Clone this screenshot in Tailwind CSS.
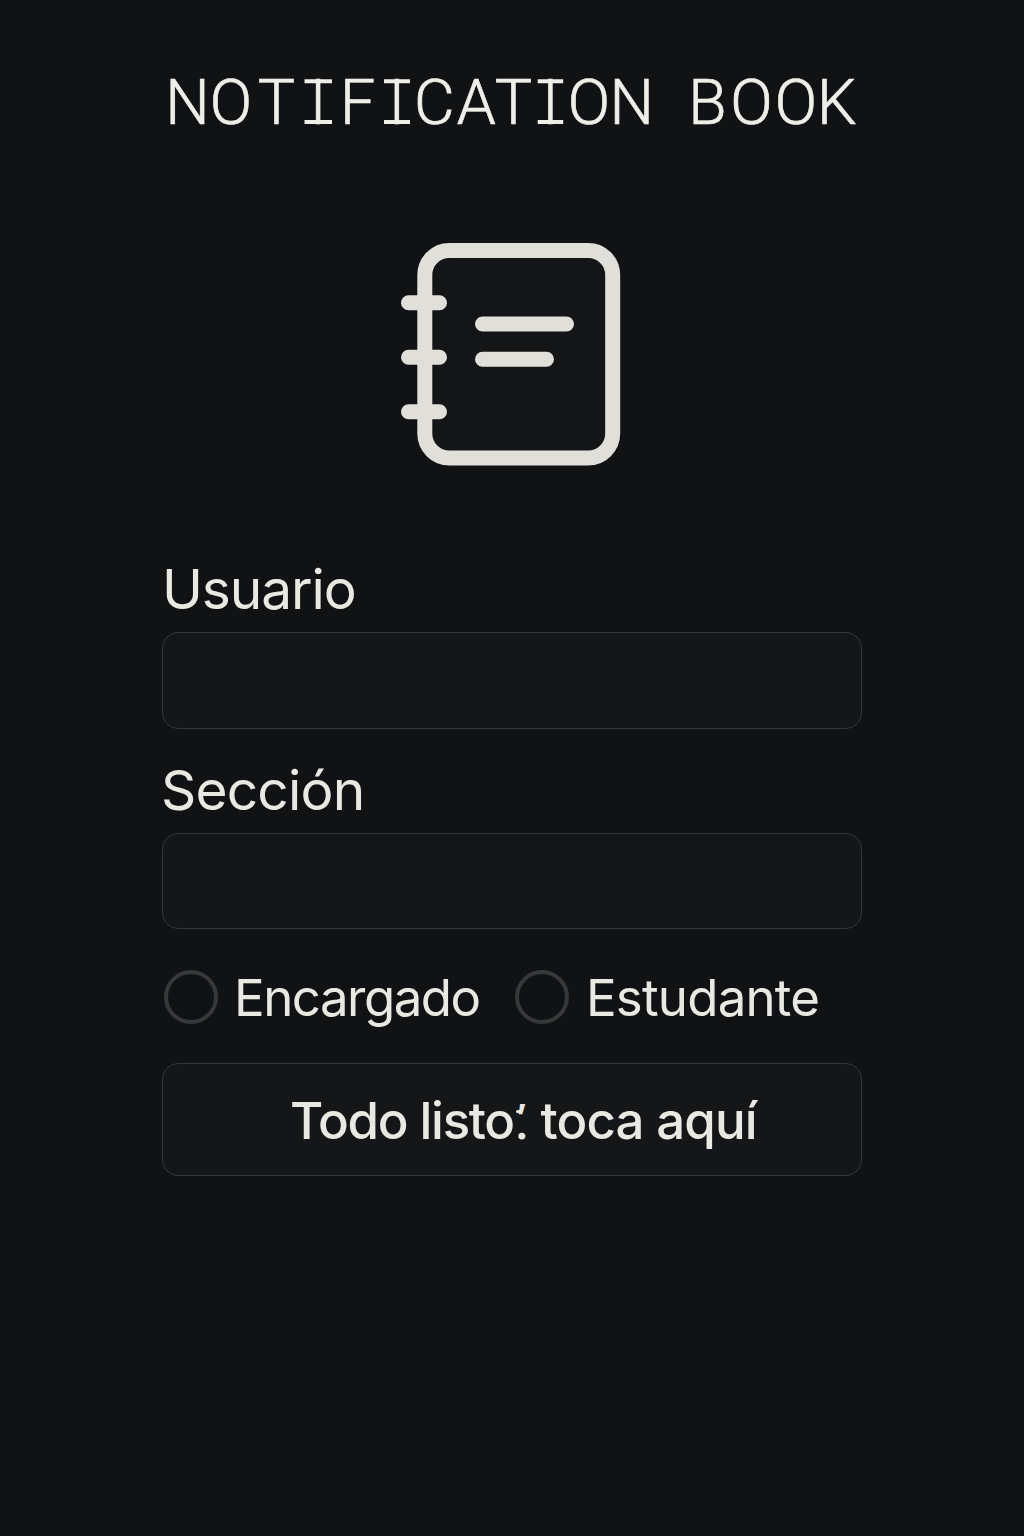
<!DOCTYPE html>
<html lang="es">
<head>
<meta charset="utf-8">
<title>Notification Book</title>
<script src="https://cdn.jsdelivr.net/npm/@tailwindcss/browser@4"></script>
</head>
<body class="bg-[#101214] text-[#eae8e2] font-['Inter',sans-serif]">
<main class="w-[700px] h-[1536px] ml-[162px] pt-[60px] flex flex-col">
  <h1 class="h-[80px] -mx-[12px]">
    <svg class="block w-[724px] h-[80px]" viewBox="150 60 724 80" fill="#f0eee9">
      <text y="124" text-anchor="middle" stroke="#f0eee9" stroke-width="0.7" class="font-['Roboto',sans-serif] font-light text-[62.5px]" x="187.5 231 276.5 318 357.5 396.8 434.2 476.4 513.5 550.4 588.8 631.7 670 707.5 751.5 796 836.8">NOTIFICATION BOOK</text>
      <g stroke="#f0eee9" stroke-width="4"><path d="M304.5 81.3h27.5M304.5 122h27.5M384 81.3h26M384 122h26M537.7 81.3h25.5M537.7 122h25.5"/></g>
    </svg>
  </h1>
  <svg class="block mt-[100px] ml-[236px] w-[226px] h-[230px] shrink-0" viewBox="398 240 226 230" fill="none" stroke="#e1dfda" stroke-width="15" stroke-linecap="round">
    <rect x="424.8" y="250.5" width="187.9" height="207.5" rx="24.5" fill="#131517"/>
    <path d="M408.5 302.7h31M408.5 357.3h31M408.5 411.7h31M482.5 324h84M482.5 359.3h64"/>
  </svg>
  <form class="flex flex-col">
    <label for="usuario" class="mt-[89px] h-[60px] leading-[60px] text-[55px] tracking-[-1.1px]">Usuario</label>
    <input id="usuario" class="mt-[13px] h-[97px] w-[700px] rounded-[16px] border border-[#343638] bg-[#141618] px-6 text-4xl outline-none">
    <label for="seccion" class="mt-[31px] h-[60px] leading-[60px] text-[55px] tracking-[-0.8px] -indent-px">Sección</label>
    <input id="seccion" class="mt-[13px] h-[96px] w-[700px] rounded-[16px] border border-[#343638] bg-[#141618] px-6 text-4xl outline-none">
    <div class="mt-[41px] h-[54px] flex items-center text-[51px] whitespace-nowrap">
      <label class="w-[351px] pl-[2px] flex items-center gap-[16px] tracking-[-1.5px]"><span class="size-[54px] shrink-0 rounded-full border-[4.5px] border-[#373839]"></span><span class="pt-[3px]">Encargado</span></label>
      <label class="pl-[2px] flex items-center gap-[17px] tracking-[-0.8px]"><span class="size-[54px] shrink-0 rounded-full border-[4.5px] border-[#373839]"></span><span class="pt-[3px]">Estudante</span></label>
    </div>
    <button type="button" class="mt-[39px] h-[113px] w-[700px] rounded-[16px] border border-[#343638] bg-[#141618] pt-[4px] pl-[127px] text-left text-[51px] font-medium whitespace-nowrap"><span class="tracking-[-1.3px]">Todo listo</span><span class="relative inline-block w-[14px] tracking-normal"><span class="font-['Roboto',sans-serif] font-medium text-[51px] ml-px">.</span><span class="absolute left-[2px] top-[17px] text-[34px] leading-none font-bold">’</span><span class="absolute left-[2px] top-[27px] h-[3px] w-[6px] rounded-l-full bg-[#eae8e2]"></span></span><span class="tracking-[-0.9px]"> toca aquí</span></button>
  </form>
</main>
</body>
</html>
